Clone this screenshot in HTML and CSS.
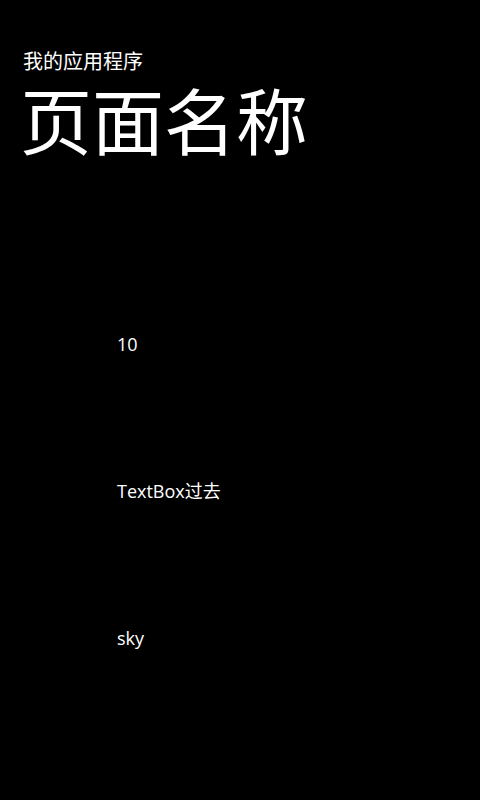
FILE: index.html
```html
<!DOCTYPE html>
<html lang="zh-CN">
<head>
<meta charset="utf-8">
<title>页面名称</title>
<link rel="stylesheet" href="styles.css">
</head>
<body>
<div class="page">
  <header class="title-panel">
    <div class="app-title">我的应用程序</div>
    <h1 class="page-title">页面名称</h1>
  </header>
  <main class="content">
    <div class="item">10</div>
    <div class="item">TextBox过去</div>
    <div class="item">sky</div>
  </main>
</div>
</body>
</html>
```

FILE: styles.css
```css
html, body {
  margin: 0;
  padding: 0;
  background: #000;
  color: #fff;
  font-family: "Open Sans", "Noto Sans", "Noto Sans CJK SC", sans-serif;
}
.page {
  width: 480px;
  height: 800px;
  overflow: hidden;
}
.title-panel {
  display: flex;
  flex-direction: column;
  gap: 6px;
  padding: 49px 0 0 20px;
}
.app-title {
  font-family: "Noto Sans CJK SC", sans-serif;
  font-size: 20px;
  line-height: 23px;
  padding-left: 3px;
}
.page-title {
  margin: 0;
  font-family: "Noto Sans CJK SC", sans-serif;
  font-weight: 400;
  font-size: 72px;
  line-height: 80px;
}
.content {
  display: flex;
  flex-direction: column;
  gap: 120px;
  padding: 173px 0 0 117px;
}
.item {
  font-size: 18px;
  line-height: 27px;
}
```
